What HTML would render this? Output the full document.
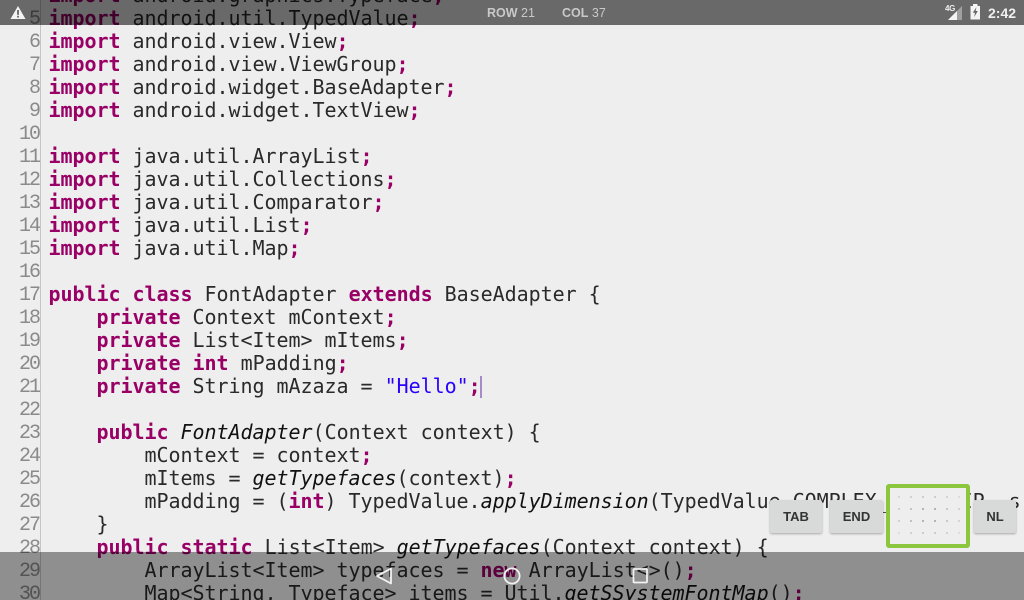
<!DOCTYPE html>
<html>
<head>
<meta charset="utf-8">
<style>
html,body{margin:0;padding:0;width:1024px;height:600px;overflow:hidden;background:#eeeeee}
#wrap{position:relative;width:1024px;height:600px;overflow:hidden}
#gut{position:absolute;left:40px;top:0;width:1px;height:600px;background:#c4c4c4}
.l{position:absolute;left:48.5px;height:23px;line-height:23px;white-space:pre;font-family:"DejaVu Sans Mono","Liberation Mono",monospace;font-size:20px;letter-spacing:-.04px;color:#2a2a2a}
.n{position:absolute;left:0;width:39px;height:23px;margin-top:1px;line-height:23px;text-align:right;font-family:"Liberation Mono",monospace;font-size:20px;letter-spacing:-2px;color:#8a8a8a}
b{color:#990066;font-weight:bold}
i{color:#111;font-style:italic}
u{text-decoration:none;color:#2a00ff}
#caret{position:absolute;left:480px;top:376px;width:2px;height:22px;background:#a58cc8}
#top{position:absolute;left:0;top:0;width:1024px;height:25px;background:rgba(0,0,0,.56)}
#bot{position:absolute;left:0;top:552px;width:1024px;height:48px;background:rgba(0,0,0,.4)}
.s{position:absolute;top:5px;height:16px;line-height:16px;font-family:"Liberation Sans",sans-serif;font-size:12.5px;color:#c9c9c9;white-space:pre}
.s strong{font-weight:bold}
.btn{position:absolute;top:500px;height:33px;line-height:34px;background:#d8d9d9;border-radius:2px;box-shadow:0 1px 2px rgba(0,0,0,.3);text-align:center;font-family:"Liberation Sans",sans-serif;font-size:13px;font-weight:bold;color:#333}
#pad{position:absolute;left:886px;top:484px;width:76px;height:56px;border:4px solid #8cc63f;border-radius:3px;background:#eeeeee}
</style>
</head>
<body>
<div id="wrap">
<div id="gut"></div>

<div class="l" style="top:-16px"><b>import</b> android.graphics.Typeface<b>;</b></div>
<div class="n" style="top:7px">5</div><div class="l" style="top:7px"><b>import</b> android.util.TypedValue<b>;</b></div>
<div class="n" style="top:30px">6</div><div class="l" style="top:30px"><b>import</b> android.view.View<b>;</b></div>
<div class="n" style="top:53px">7</div><div class="l" style="top:53px"><b>import</b> android.view.ViewGroup<b>;</b></div>
<div class="n" style="top:76px">8</div><div class="l" style="top:76px"><b>import</b> android.widget.BaseAdapter<b>;</b></div>
<div class="n" style="top:99px">9</div><div class="l" style="top:99px"><b>import</b> android.widget.TextView<b>;</b></div>
<div class="n" style="top:122px">10</div>
<div class="n" style="top:145px">11</div><div class="l" style="top:145px"><b>import</b> java.util.ArrayList<b>;</b></div>
<div class="n" style="top:168px">12</div><div class="l" style="top:168px"><b>import</b> java.util.Collections<b>;</b></div>
<div class="n" style="top:191px">13</div><div class="l" style="top:191px"><b>import</b> java.util.Comparator<b>;</b></div>
<div class="n" style="top:214px">14</div><div class="l" style="top:214px"><b>import</b> java.util.List<b>;</b></div>
<div class="n" style="top:237px">15</div><div class="l" style="top:237px"><b>import</b> java.util.Map<b>;</b></div>
<div class="n" style="top:260px">16</div>
<div class="n" style="top:283px">17</div><div class="l" style="top:283px"><b>public</b> <b>class</b> FontAdapter <b>extends</b> BaseAdapter {</div>
<div class="n" style="top:306px">18</div><div class="l" style="top:306px">    <b>private</b> Context mContext<b>;</b></div>
<div class="n" style="top:329px">19</div><div class="l" style="top:329px">    <b>private</b> List&lt;Item&gt; mItems<b>;</b></div>
<div class="n" style="top:352px">20</div><div class="l" style="top:352px">    <b>private</b> <b>int</b> mPadding<b>;</b></div>
<div class="n" style="top:375px">21</div><div class="l" style="top:375px">    <b>private</b> String mAzaza = <u>"Hello"</u><b>;</b></div>
<div class="n" style="top:398px">22</div>
<div class="n" style="top:421px">23</div><div class="l" style="top:421px">    <b>public</b> <i>FontAdapter</i>(Context context) {</div>
<div class="n" style="top:444px">24</div><div class="l" style="top:444px">        mContext = context<b>;</b></div>
<div class="n" style="top:467px">25</div><div class="l" style="top:467px">        mItems = <i>getTypefaces</i>(context)<b>;</b></div>
<div class="n" style="top:490px">26</div><div class="l" style="top:490px">        mPadding = (<b>int</b>) TypedValue.<i>applyDimension</i>(TypedValue.COMPLEX_UNIT_DIP, s</div>
<div class="n" style="top:513px">27</div><div class="l" style="top:513px">    }</div>
<div class="n" style="top:536px">28</div><div class="l" style="top:536px">    <b>public</b> <b>static</b> List&lt;Item&gt; <i>getTypefaces</i>(Context context) {</div>
<div class="n" style="top:559px">29</div><div class="l" style="top:559px">        ArrayList&lt;Item&gt; typefaces = <b>new</b> ArrayList&lt;&gt;()<b>;</b></div>
<div class="n" style="top:582px">30</div><div class="l" style="top:582px">        Map&lt;String, Typeface&gt; items = Util.<i>getSSystemFontMap</i>()<b>;</b></div>

<div id="caret"></div>

<div class="btn" style="left:770px;width:52px">TAB</div>
<div class="btn" style="left:830px;width:53px">END</div>
<div class="btn" style="left:974px;width:42px">NL</div>
<div id="pad"></div>
<svg style="position:absolute;left:886px;top:484px" width="84" height="64" viewBox="886 484 84 64">
<g fill="#b4b4b4">
<rect x="898" y="496" width="2" height="2" fill="#d8d8d8"/><rect x="910" y="496" width="2" height="2" fill="#d0d0d0"/><rect x="922" y="496" width="2" height="2" fill="#cccccc"/><rect x="934" y="496" width="2" height="2" fill="#cccccc"/><rect x="946" y="496" width="2" height="2" fill="#d4d4d4"/><rect x="958" y="496" width="2" height="2" fill="#dddddd"/>
<rect x="898" y="508" width="2" height="2" fill="#d0d0d0"/><rect x="910" y="508" width="2" height="2" fill="#c4c4c4"/><rect x="922" y="508" width="2" height="2"/><rect x="934" y="508" width="2" height="2"/><rect x="946" y="508" width="2" height="2" fill="#c8c8c8"/><rect x="958" y="508" width="2" height="2" fill="#d4d4d4"/>
<rect x="898" y="520" width="2" height="2" fill="#d0d0d0"/><rect x="910" y="520" width="2" height="2" fill="#c0c0c0"/><rect x="922" y="520" width="2" height="2"/><rect x="934" y="520" width="2" height="2"/><rect x="946" y="520" width="2" height="2" fill="#c8c8c8"/><rect x="958" y="520" width="2" height="2" fill="#d4d4d4"/>
<rect x="898" y="532" width="2" height="2" fill="#dddddd"/><rect x="910" y="532" width="2" height="2" fill="#d0d0d0"/><rect x="922" y="532" width="2" height="2" fill="#cccccc"/><rect x="934" y="532" width="2" height="2" fill="#cccccc"/><rect x="946" y="532" width="2" height="2" fill="#d4d4d4"/><rect x="958" y="532" width="2" height="2" fill="#dddddd"/>
</g>
</svg>

<div id="top"></div>
<div id="bot"></div>

<svg style="position:absolute;left:10px;top:5px" width="16" height="15" viewBox="0 0 16 15">
<path d="M8 1 L15.5 14 H0.5 Z" fill="#f4f4f4"/>
<rect x="7.1" y="5" width="1.8" height="4.8" fill="#666"/>
<rect x="7.1" y="10.8" width="1.8" height="1.8" fill="#666"/>
</svg>

<div class="s" style="left:487px"><strong>ROW</strong> 21</div>
<div class="s" style="left:562px"><strong>COL</strong> 37</div>

<div style="position:absolute;left:945px;top:5px;font:bold 8px/8px 'Liberation Sans',sans-serif;letter-spacing:-.3px;color:#eee">4G</div>
<svg style="position:absolute;left:944px;top:4px" width="40" height="17" viewBox="944 4 40 17">
<path d="M948 20 L962 20 L962 6 Z" fill="#a0a0a0"/>
<path d="M948 20 L957 20 L957 11 Z" fill="#f4f4f4"/>
<path d="M970.5 6 H973 V4 H977.5 V6 H980 V19.5 H970.5 Z" fill="#f4f4f4"/>
<path d="M976.5 7 L972.8 12.8 H975 L974.2 17 L977.8 11 H975.6 Z" fill="#666"/>
</svg>
<div style="position:absolute;left:988px;top:5px;height:16px;font:bold 14px/16px 'Liberation Sans',sans-serif;color:#f0f0f0">2:42</div>

<svg style="position:absolute;left:370px;top:562px" width="290" height="28" viewBox="370 562 290 28">
<path d="M391 568.5 V583.5 L377 576 Z" fill="none" stroke="#f2f2f2" stroke-width="1.8" stroke-linejoin="round"/>
<circle cx="512" cy="576" r="7.6" fill="none" stroke="#f2f2f2" stroke-width="1.8"/>
<rect x="633.5" y="569" width="13.5" height="13.5" rx="1" fill="none" stroke="#f2f2f2" stroke-width="1.8"/>
</svg>
</div>
</body>
</html>
